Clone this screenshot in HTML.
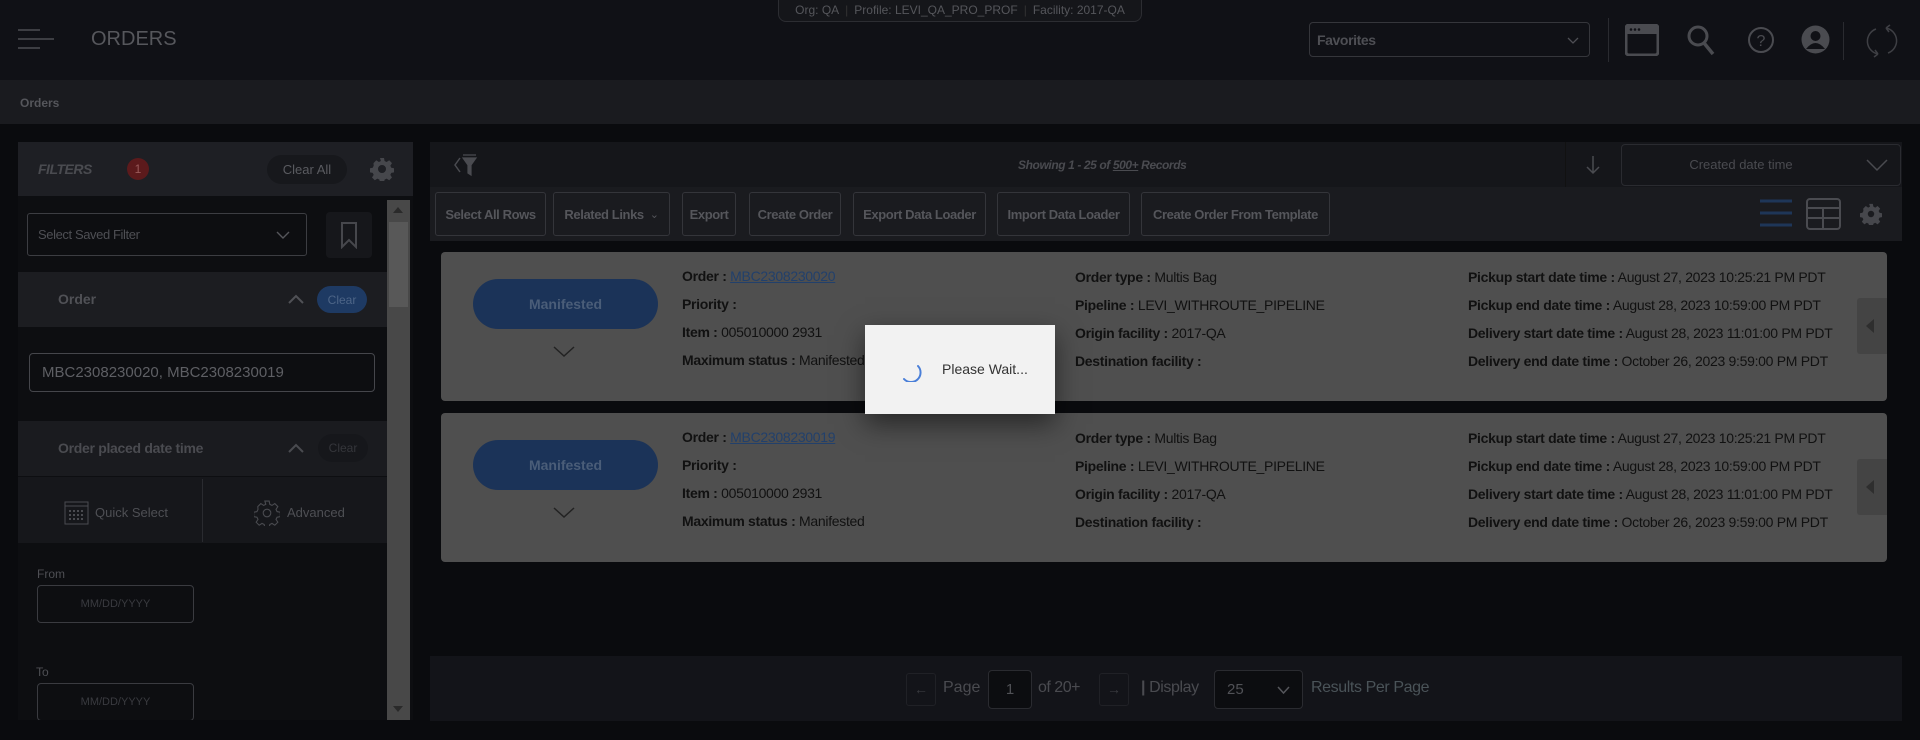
<!DOCTYPE html>
<html><head><meta charset="utf-8"><style>
*{box-sizing:border-box;margin:0;padding:0}
body{width:1920px;height:740px;background:#0a0b0e;font-family:"Liberation Sans",sans-serif;position:relative;overflow:hidden;color:#5a5b60}
.a{position:absolute}
.hdr{left:0;top:0;width:1920px;height:80px;background:#101116}
.bc{left:0;top:80px;width:1920px;height:44px;background:#1a1b1f}
.btn{position:absolute;top:192px;height:44px;border:1px solid #34353a;border-radius:3px;font-size:13px;font-weight:bold;color:#55565b;display:flex;align-items:center;justify-content:center;letter-spacing:-0.4px}
.card{position:absolute;left:441px;width:1446px;background:#4f4f4f;border-radius:4px}
.pill{position:absolute;left:32px;top:27px;width:185px;height:50px;border-radius:25px;background:#1b3358;color:#4a5d78;font-size:14px;font-weight:bold;display:flex;align-items:center;justify-content:center}
.t{position:absolute;font-size:14px;color:#111;white-space:nowrap;letter-spacing:-0.3px}
.t b{font-weight:bold}
.lnk{color:#22406b;text-decoration:underline}
.tab{position:absolute;right:0;width:30px;height:56px;background:#444;border-radius:3px 0 0 3px}
</style></head><body>
<div class="a hdr"></div>
<div class="a" style="left:778px;top:-2px;width:364px;height:24px;border:1px solid #2c2d32;border-radius:0 0 8px 8px;background:#15161a;font-size:12px;color:#55565b;display:flex;align-items:center;justify-content:center;gap:6px">Org: QA <span style="color:#333">|</span> Profile: LEVI_QA_PRO_PROF <span style="color:#333">|</span> Facility: 2017-QA</div>
<svg class="a" style="left:18px;top:28px" width="36" height="24"><path d="M0 2H22M0 11H36M0 20H22" stroke="#3d3e43" stroke-width="2"/></svg>
<div class="a" style="left:91px;top:28px;font-size:20px;color:#56575c">ORDERS</div>
<div class="a" style="left:1309px;top:22px;width:281px;height:35px;border:1px solid #35363b;border-radius:4px;font-size:14px;font-weight:bold;color:#4e4f54;padding:9px 7px;letter-spacing:-0.4px">Favorites<svg style="position:absolute;right:10px;top:14px" width="12" height="8"><path d="M1 1L6 6L11 1" stroke="#4e4f54" fill="none" stroke-width="1.3"/></svg></div>
<div class="a" style="left:1608px;top:18px;width:1px;height:44px;background:#2a2b30"></div>
<svg class="a" style="left:1625px;top:24px" width="34" height="32"><rect x="1" y="1" width="32" height="30" rx="3" fill="none" stroke="#4a4b50" stroke-width="3"/><rect x="1" y="1" width="32" height="9" fill="#4a4b50"/><circle cx="6" cy="5.5" r="1.3" fill="#101116"/><circle cx="10" cy="5.5" r="1.3" fill="#101116"/><circle cx="14" cy="5.5" r="1.3" fill="#101116"/></svg>
<svg class="a" style="left:1686px;top:24px" width="30" height="32"><circle cx="12" cy="12" r="9" fill="none" stroke="#4a4b50" stroke-width="3"/><path d="M18 19L27 30" stroke="#4a4b50" stroke-width="3.5"/></svg>
<svg class="a" style="left:1747px;top:26px" width="28" height="28"><circle cx="14" cy="14" r="12" fill="none" stroke="#4a4b50" stroke-width="2"/><text x="14" y="20" font-size="16" text-anchor="middle" fill="#4a4b50" font-family="Liberation Sans">?</text></svg>
<svg class="a" style="left:1801px;top:25px" width="29" height="29"><circle cx="14.5" cy="14.5" r="14" fill="#4a4b50"/><circle cx="14.5" cy="11" r="5" fill="#101116"/><path d="M5 24Q14.5 12 24 24" fill="#101116"/></svg>
<div class="a" style="left:1843px;top:22px;width:1px;height:38px;background:#2a2b30"></div>
<svg class="a" style="left:1866px;top:24px" width="32" height="34"><path d="M10 5A13 13 0 0 0 12 30M22 29A13 13 0 0 0 20 4M20 4L24 1M20 4L23 8M12 30L8 33M12 30L9 26" stroke="#3e3f44" fill="none" stroke-width="1.5"/></svg>
<div class="a bc"></div>
<div class="a" style="left:20px;top:96px;font-size:12px;font-weight:bold;color:#55565b">Orders</div>

<!-- filter panel -->
<div class="a" style="left:18px;top:142px;width:395px;height:578px;background:#0d0e11"></div>
<div class="a" style="left:18px;top:142px;width:395px;height:54px;background:#1e1f24"></div>
<div class="a" style="left:38px;top:161px;font-size:14px;font-weight:bold;font-style:italic;color:#4a4b50;letter-spacing:-0.5px">FILTERS</div>
<div class="a" style="left:127px;top:158px;width:22px;height:22px;border-radius:50%;background:#5c1a1c;color:#9a5a5a;font-size:12px;display:flex;align-items:center;justify-content:center">1</div>
<div class="a" style="left:267px;top:155px;width:80px;height:29px;border-radius:15px;background:#17181c;color:#5a5b60;font-size:13px;display:flex;align-items:center;justify-content:center">Clear All</div>
<svg class="a" style="left:370px;top:157px" width="24" height="24" viewBox="0 0 24 24"><path fill="#46474c" d="M12 8a4 4 0 1 0 0 8a4 4 0 0 0 0-8zM10 1h4l.6 3 2 1 2.6-1.7 2.8 2.8-1.7 2.6 1 2 3 .6v4l-3 .6-1 2 1.7 2.6-2.8 2.8-2.6-1.7-2 1-.6 3h-4l-.6-3-2-1-2.6 1.7-2.8-2.8 1.7-2.6-1-2-3-.6v-4l3-.6 1-2L3.5 6.1l2.8-2.8 2.6 1.7 2-1z" fill-rule="evenodd"/><circle cx="12" cy="12" r="3.5" fill="#1e1f24"/></svg>
<div class="a" style="left:387px;top:200px;width:23px;height:520px;background:#484848"></div>
<div class="a" style="left:389px;top:222px;width:19px;height:85px;background:#585858"></div>
<svg class="a" style="left:392px;top:206px" width="12" height="8"><path d="M1 7L6 1L11 7Z" fill="#2a2a2a"/></svg>
<svg class="a" style="left:392px;top:705px" width="12" height="8"><path d="M1 1L6 7L11 1Z" fill="#2a2a2a"/></svg>
<div class="a" style="left:27px;top:213px;width:280px;height:43px;border:1px solid #3c3d42;border-radius:3px;font-size:13px;color:#4e4f54;padding:13px 10px;letter-spacing:-0.4px">Select Saved Filter<svg style="position:absolute;right:16px;top:17px" width="14" height="9"><path d="M1 1L7 7L13 1" stroke="#55565b" fill="none" stroke-width="1.4"/></svg></div>
<div class="a" style="left:326px;top:212px;width:46px;height:46px;border-radius:4px;background:#16171b"></div>
<svg class="a" style="left:340px;top:221px" width="18" height="28"><path d="M2 2H16V26L9 19L2 26Z" stroke="#46474c" fill="none" stroke-width="2"/></svg>
<div class="a" style="left:18px;top:272px;width:369px;height:55px;background:#1c1d21"></div>
<div class="a" style="left:58px;top:291px;font-size:14px;font-weight:bold;color:#505156">Order</div>
<svg class="a" style="left:288px;top:294px" width="16" height="10"><path d="M1 9L8 2L15 9" stroke="#505156" fill="none" stroke-width="2"/></svg>
<div class="a" style="left:317px;top:286px;width:50px;height:27px;border-radius:14px;background:#1e3a63;color:#4d6587;font-size:12px;display:flex;align-items:center;justify-content:center">Clear</div>
<div class="a" style="left:29px;top:353px;width:346px;height:39px;border:1px solid #45464b;border-radius:4px;font-size:15px;color:#5e5f64;padding:10px 12px">MBC2308230020, MBC2308230019</div>
<div class="a" style="left:18px;top:421px;width:369px;height:55px;background:#1a1b1f"></div>
<div class="a" style="left:58px;top:440px;font-size:14px;font-weight:bold;color:#4a4b50;letter-spacing:-0.3px">Order placed date time</div>
<svg class="a" style="left:288px;top:443px" width="16" height="10"><path d="M1 9L8 2L15 9" stroke="#4a4b50" fill="none" stroke-width="2"/></svg>
<div class="a" style="left:318px;top:434px;width:50px;height:28px;border-radius:14px;background:#16171b;color:#35363b;font-size:12px;display:flex;align-items:center;justify-content:center">Clear</div>
<div class="a" style="left:18px;top:477px;width:369px;height:66px;background:#16171b"></div>
<div class="a" style="left:202px;top:479px;width:1px;height:63px;background:#2a2b30"></div>
<svg class="a" style="left:64px;top:501px" width="25" height="24"><rect x="1" y="1" width="23" height="22" fill="none" stroke="#4a4b50"/><path d="M1 5H24" stroke="#4a4b50"/><g fill="#4a4b50"><rect x="5" y="9" width="2" height="2"/><rect x="9" y="9" width="2" height="2"/><rect x="13" y="9" width="2" height="2"/><rect x="17" y="9" width="2" height="2"/><rect x="5" y="13" width="2" height="2"/><rect x="9" y="13" width="2" height="2"/><rect x="13" y="13" width="2" height="2"/><rect x="17" y="13" width="2" height="2"/><rect x="5" y="17" width="2" height="2"/><rect x="9" y="17" width="2" height="2"/><rect x="13" y="17" width="2" height="2"/><rect x="17" y="17" width="2" height="2"/></g></svg>
<div class="a" style="left:95px;top:505px;font-size:13px;color:#4e4f54">Quick Select</div>
<svg class="a" style="left:254px;top:500px" width="26" height="26" viewBox="0 0 24 24"><path fill="none" stroke="#4a4b50" stroke-width="1" d="M10 1h4l.6 3 2 1 2.6-1.7 2.8 2.8-1.7 2.6 1 2 3 .6v4l-3 .6-1 2 1.7 2.6-2.8 2.8-2.6-1.7-2 1-.6 3h-4l-.6-3-2-1-2.6 1.7-2.8-2.8 1.7-2.6-1-2-3-.6v-4l3-.6 1-2L3.5 6.1l2.8-2.8 2.6 1.7 2-1z"/><circle cx="12" cy="12" r="3.5" fill="none" stroke="#4a4b50"/></svg>
<div class="a" style="left:287px;top:505px;font-size:13px;color:#4e4f54">Advanced</div>
<div class="a" style="left:37px;top:567px;font-size:12px;color:#4e4f54">From</div>
<div class="a" style="left:37px;top:585px;width:157px;height:38px;border:1px solid #3a3b40;border-radius:4px;font-size:11px;color:#3a3b40;text-align:center;line-height:36px">MM/DD/YYYY</div>
<div class="a" style="left:36px;top:665px;font-size:12px;color:#4e4f54">To</div>
<div class="a" style="left:37px;top:683px;width:157px;height:38px;border:1px solid #3a3b40;border-radius:4px;font-size:11px;color:#3a3b40;text-align:center;line-height:36px">MM/DD/YYYY</div>
<div class="a" style="left:0;top:720px;width:1920px;height:20px;background:#0a0b0e"></div>

<!-- right panel -->
<div class="a" style="left:430px;top:142px;width:1472px;height:45px;background:#15161a"></div>
<svg class="a" style="left:452px;top:153px" width="32" height="24"><path d="M8 5L3 12L8 19" stroke="#4a4b50" fill="none" stroke-width="1.5"/><path d="M11 2H24M11 5H24L19 12V22L16 20V12Z" stroke="#4a4b50" fill="#4a4b50" stroke-width="1.2"/></svg>
<div class="a" style="left:1018px;top:158px;font-size:12px;font-weight:bold;font-style:italic;color:#4a4b50;letter-spacing:-0.4px">Showing 1 - 25 of <u>500+</u> Records</div>
<div class="a" style="left:1565px;top:142px;width:1px;height:45px;background:#111"></div>
<svg class="a" style="left:1585px;top:155px" width="16" height="20"><path d="M8 1V18M2 12L8 18L14 12" stroke="#4a4b50" fill="none" stroke-width="1.5"/></svg>
<div class="a" style="left:1621px;top:144px;width:280px;height:42px;border:1px solid #2a2b30;border-radius:4px;background:#15161a;font-size:13px;color:#4a4b50;text-align:center;line-height:40px;padding-right:40px">Created date time<svg style="position:absolute;right:12px;top:14px" width="22" height="13"><path d="M1 1L11 11L21 1" stroke="#4a4b50" fill="none" stroke-width="1.5"/></svg></div>
<div class="a" style="left:430px;top:187px;width:1472px;height:54px;background:#1a1b1f"></div>
<div class="btn" style="left:435px;width:111px">Select All Rows</div>
<div class="btn" style="left:553px;width:117px">Related Links <span style="font-weight:normal;margin-left:6px;font-size:11px">&#8964;</span></div>
<div class="btn" style="left:682px;width:54px">Export</div>
<div class="btn" style="left:749px;width:92px">Create Order</div>
<div class="btn" style="left:853px;width:133px">Export Data Loader</div>
<div class="btn" style="left:997px;width:133px">Import Data Loader</div>
<div class="btn" style="left:1141px;width:189px">Create Order From Template</div>
<svg class="a" style="left:1760px;top:198px" width="32" height="30"><path d="M0 3H32M0 15H32M0 27H32" stroke="#1e3658" stroke-width="3"/></svg>
<svg class="a" style="left:1806px;top:198px" width="35" height="32"><rect x="1" y="1" width="33" height="30" rx="3" fill="none" stroke="#4a4b50" stroke-width="2"/><path d="M1 10H34M1 20H34M17 10V31" stroke="#4a4b50" stroke-width="2"/></svg>
<svg class="a" style="left:1860px;top:203px" width="22" height="22" viewBox="0 0 24 24"><path fill="#46474c" fill-rule="evenodd" d="M10 1h4l.6 3 2 1 2.6-1.7 2.8 2.8-1.7 2.6 1 2 3 .6v4l-3 .6-1 2 1.7 2.6-2.8 2.8-2.6-1.7-2 1-.6 3h-4l-.6-3-2-1-2.6 1.7-2.8-2.8 1.7-2.6-1-2-3-.6v-4l3-.6 1-2L3.5 6.1l2.8-2.8 2.6 1.7 2-1z"/><circle cx="12" cy="12" r="3.5" fill="#1a1b1f"/></svg>

<div class="card" style="top:252px;height:149px">
 <div class="pill">Manifested</div>
 <svg class="a" style="left:112px;top:94px" width="22" height="12"><path d="M1 1L11 10L21 1" stroke="#222" fill="none" stroke-width="1.5"/></svg>
 <div class="t" style="left:241px;top:16px"><b>Order :</b> <span class="lnk">MBC2308230020</span></div>
 <div class="t" style="left:241px;top:44px"><b>Priority :</b></div>
 <div class="t" style="left:241px;top:72px"><b>Item :</b> 005010000 2931</div>
 <div class="t" style="left:241px;top:100px"><b>Maximum status :</b> Manifested</div>
 <div class="t" style="left:634px;top:17px"><b>Order type :</b> Multis Bag</div>
 <div class="t" style="left:634px;top:45px"><b>Pipeline :</b> LEVI_WITHROUTE_PIPELINE</div>
 <div class="t" style="left:634px;top:73px"><b>Origin facility :</b> 2017-QA</div>
 <div class="t" style="left:634px;top:101px"><b>Destination facility :</b></div>
 <div class="t" style="left:1027px;top:17px"><b>Pickup start date time :</b> August 27, 2023 10:25:21 PM PDT</div>
 <div class="t" style="left:1027px;top:45px"><b>Pickup end date time :</b> August 28, 2023 10:59:00 PM PDT</div>
 <div class="t" style="left:1027px;top:73px"><b>Delivery start date time :</b> August 28, 2023 11:01:00 PM PDT</div>
 <div class="t" style="left:1027px;top:101px"><b>Delivery end date time :</b> October 26, 2023 9:59:00 PM PDT</div>
 <div class="tab" style="top:46px"><svg style="position:absolute;left:9px;top:21px" width="8" height="14"><path d="M8 0L0 7L8 14Z" fill="#2e2e2e"/></svg></div>
</div>
<div class="card" style="top:413px;height:149px">
 <div class="pill">Manifested</div>
 <svg class="a" style="left:112px;top:94px" width="22" height="12"><path d="M1 1L11 10L21 1" stroke="#222" fill="none" stroke-width="1.5"/></svg>
 <div class="t" style="left:241px;top:16px"><b>Order :</b> <span class="lnk">MBC2308230019</span></div>
 <div class="t" style="left:241px;top:44px"><b>Priority :</b></div>
 <div class="t" style="left:241px;top:72px"><b>Item :</b> 005010000 2931</div>
 <div class="t" style="left:241px;top:100px"><b>Maximum status :</b> Manifested</div>
 <div class="t" style="left:634px;top:17px"><b>Order type :</b> Multis Bag</div>
 <div class="t" style="left:634px;top:45px"><b>Pipeline :</b> LEVI_WITHROUTE_PIPELINE</div>
 <div class="t" style="left:634px;top:73px"><b>Origin facility :</b> 2017-QA</div>
 <div class="t" style="left:634px;top:101px"><b>Destination facility :</b></div>
 <div class="t" style="left:1027px;top:17px"><b>Pickup start date time :</b> August 27, 2023 10:25:21 PM PDT</div>
 <div class="t" style="left:1027px;top:45px"><b>Pickup end date time :</b> August 28, 2023 10:59:00 PM PDT</div>
 <div class="t" style="left:1027px;top:73px"><b>Delivery start date time :</b> August 28, 2023 11:01:00 PM PDT</div>
 <div class="t" style="left:1027px;top:101px"><b>Delivery end date time :</b> October 26, 2023 9:59:00 PM PDT</div>
 <div class="tab" style="top:46px"><svg style="position:absolute;left:9px;top:21px" width="8" height="14"><path d="M8 0L0 7L8 14Z" fill="#2e2e2e"/></svg></div>
</div>

<!-- pagination -->
<div class="a" style="left:430px;top:656px;width:1472px;height:65px;background:#131419"></div>
<div class="a" style="left:906px;top:673px;width:30px;height:33px;border:1px solid #202126;border-radius:3px;color:#3a3b40;font-size:14px;text-align:center;line-height:31px">&#8592;</div>
<div class="a" style="left:943px;top:679px;font-size:16px;color:#4a4b50">Page</div>
<div class="a" style="left:988px;top:670px;width:44px;height:39px;border:1px solid #2a2b30;border-radius:4px;background:#0c0d10;color:#505156;font-size:15px;text-align:center;line-height:37px">1</div>
<div class="a" style="left:1038px;top:679px;font-size:16px;color:#4a4b50;letter-spacing:-0.5px">of 20+</div>
<div class="a" style="left:1099px;top:673px;width:30px;height:33px;border:1px solid #202126;border-radius:3px;color:#3a3b40;font-size:14px;text-align:center;line-height:31px">&#8594;</div>
<div class="a" style="left:1141px;top:679px;font-size:16px;color:#4a4b50;letter-spacing:-0.4px"><b>|</b> Display</div>
<div class="a" style="left:1214px;top:670px;width:89px;height:39px;border:1px solid #2a2b30;border-radius:4px;background:#0c0d10;color:#505156;font-size:15px;padding:10px 12px">25<svg style="position:absolute;right:12px;top:15px" width="13" height="9"><path d="M1 1L6.5 7L12 1" stroke="#55565b" fill="none" stroke-width="1.5"/></svg></div>
<div class="a" style="left:1311px;top:679px;font-size:16px;color:#4a5358;letter-spacing:-0.4px">Results Per Page</div>

<!-- modal -->
<div class="a" style="left:865px;top:325px;width:190px;height:89px;background:#f2f2f2;box-shadow:0 10px 25px rgba(0,0,0,0.5)"></div>
<svg class="a" style="left:898px;top:358px" width="24" height="24"><path d="M20 8A9 9 0 0 1 6 21" stroke="#4a7fd8" fill="none" stroke-width="2" stroke-linecap="round"/></svg>
<div class="a" style="left:942px;top:361px;font-size:14px;color:#333">Please Wait...</div>
</body></html>
